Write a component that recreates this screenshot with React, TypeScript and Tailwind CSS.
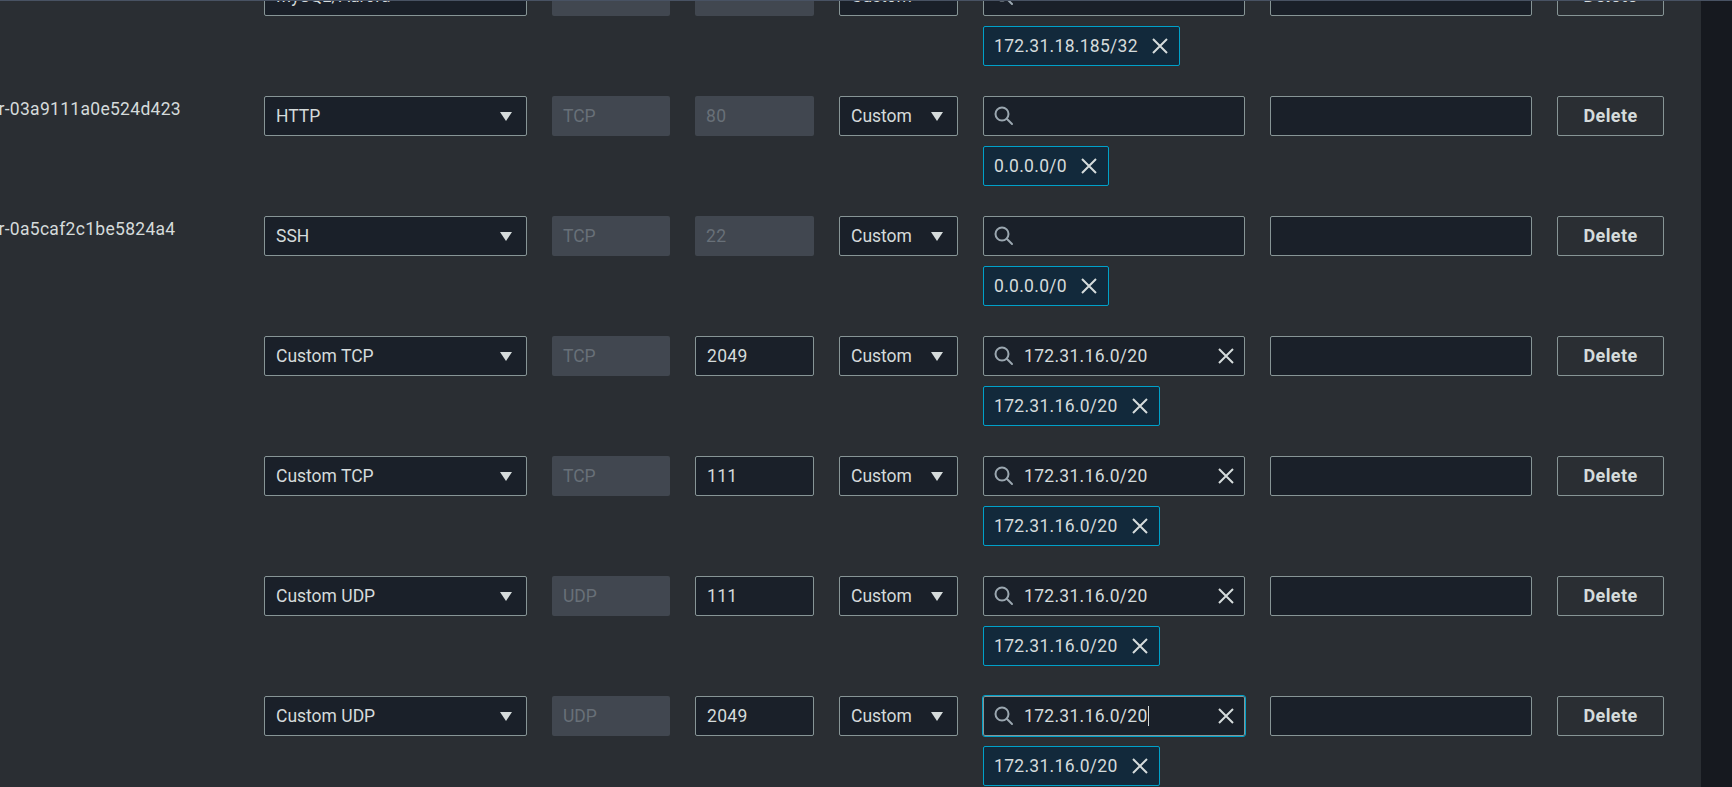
import React from 'react';

interface Rule {
  id: string;
  type: string;
  protocol: string;
  port: string;
  portEditable: boolean;
  query: string;
  cidr: string;
  focused?: boolean;
}

// first row is scrolled mostly out of view, only its lower edge shows
const rules: Rule[] = [
  { id: '', type: 'MySQL/Aurora', protocol: '', port: '', portEditable: false, query: '', cidr: '172.31.18.185/32' },
  { id: 'sgr-03a9111a0e524d423', type: 'HTTP', protocol: 'TCP', port: '80', portEditable: false, query: '', cidr: '0.0.0.0/0' },
  { id: 'sgr-0a5caf2c1be5824a4', type: 'SSH', protocol: 'TCP', port: '22', portEditable: false, query: '', cidr: '0.0.0.0/0' },
  { id: '', type: 'Custom TCP', protocol: 'TCP', port: '2049', portEditable: true, query: '172.31.16.0/20', cidr: '172.31.16.0/20' },
  { id: '', type: 'Custom TCP', protocol: 'TCP', port: '111', portEditable: true, query: '172.31.16.0/20', cidr: '172.31.16.0/20' },
  { id: '', type: 'Custom UDP', protocol: 'UDP', port: '111', portEditable: true, query: '172.31.16.0/20', cidr: '172.31.16.0/20' },
  { id: '', type: 'Custom UDP', protocol: 'UDP', port: '2049', portEditable: true, query: '172.31.16.0/20', cidr: '172.31.16.0/20', focused: true },
];

const field = 'h-[40px] shrink-0 rounded-[2px] border border-[#879596] bg-[#1a2029]';

const Caret = () => (
  <svg width="12" height="9" viewBox="0 0 12 9" className="shrink-0">
    <path d="M0 0h12L6 9z" fill="#d5dbdb" />
  </svg>
);

const SearchIcon = () => (
  <svg width="20" height="20" viewBox="0 0 20 20" fill="none" stroke="#9ba7b0" strokeWidth="2" strokeLinecap="round" className="shrink-0">
    <circle cx="8" cy="8" r="6.5" />
    <path d="M13 13l5 5" />
  </svg>
);

const XIcon = () => (
  <svg width="16" height="16" viewBox="0 0 16 16" fill="none" stroke="#d5dbdb" strokeWidth="2" className="shrink-0">
    <path d="M1 1l14 14M15 1 1 15" />
  </svg>
);

function RuleRow({ rule }: { rule: Rule }) {
  return (
    <div className="flex h-[120px] shrink-0 gap-[25px]">
      <div className="-ml-[21px] w-[260px] shrink-0 whitespace-nowrap pt-[2px] leading-[22px] tracking-[0.3px]">{rule.id}</div>

      <div className={`${field} flex w-[263px] items-center justify-between pl-[11px] pr-[14px]`}>
        <span className="whitespace-nowrap">{rule.type}</span>
        <Caret />
      </div>

      <div className="flex h-[40px] w-[118px] shrink-0 items-center rounded-[2px] bg-[#414750] px-[11px] text-[#687078]">
        {rule.protocol}
      </div>

      {rule.portEditable ? (
        <div className={`${field} flex w-[119px] items-center px-[11px] tracking-[0.3px]`}>{rule.port}</div>
      ) : (
        <div className="flex h-[40px] w-[119px] shrink-0 items-center rounded-[2px] bg-[#414750] px-[11px] tracking-[0.3px] text-[#687078]">
          {rule.port}
        </div>
      )}

      <div className={`${field} flex w-[119px] items-center justify-between pl-[11px] pr-[14px]`}>
        <span>Custom</span>
        <Caret />
      </div>

      <div className="flex w-[262px] shrink-0 flex-col items-start gap-[10px]">
        <div
          className={`${field} flex w-full items-center gap-[10px] pl-[10px] pr-[10px] ${
            rule.focused ? 'border-[#00a1c9] outline outline-1 outline-[#00a1c9]' : ''
          }`}
        >
          <SearchIcon />
          <span className="flex flex-1 items-center whitespace-nowrap tracking-[0.3px]">
            {rule.query}
            {rule.focused && <span className="inline-block h-[20px] w-[1px] bg-[#d5dbdb]" />}
          </span>
          {rule.query && <XIcon />}
        </div>
        <div className="flex h-[40px] items-center gap-[14px] rounded-[2px] border border-[#00a1c9] bg-[#12293b] pl-[10px] pr-[11px]">
          <span className="whitespace-nowrap tracking-[0.3px]">{rule.cidr}</span>
          <XIcon />
        </div>
      </div>

      <div className={`${field} w-[262px]`} />

      <button className="h-[40px] w-[107px] shrink-0 rounded-[2px] border border-[#879596] pb-[1px] text-[18px] font-bold tracking-[0.4px] text-[#d5dbdb]">
        Delete
      </button>
    </div>
  );
}

export default function App() {
  return (
    <div className="flex h-[787px] w-full overflow-hidden border-t border-[#485263] bg-[#2a2e33] font-['Roboto',sans-serif] text-[17.5px] text-[#d5dbdb]">
      <div className="min-w-0 flex-1 overflow-hidden">
        <div className="-mt-[25px] flex flex-col">
          {rules.map((rule, i) => (
            <RuleRow key={i} rule={rule} />
          ))}
        </div>
      </div>
      <div className="w-[31px] shrink-0 bg-[#16191f]" />
    </div>
  );
}
